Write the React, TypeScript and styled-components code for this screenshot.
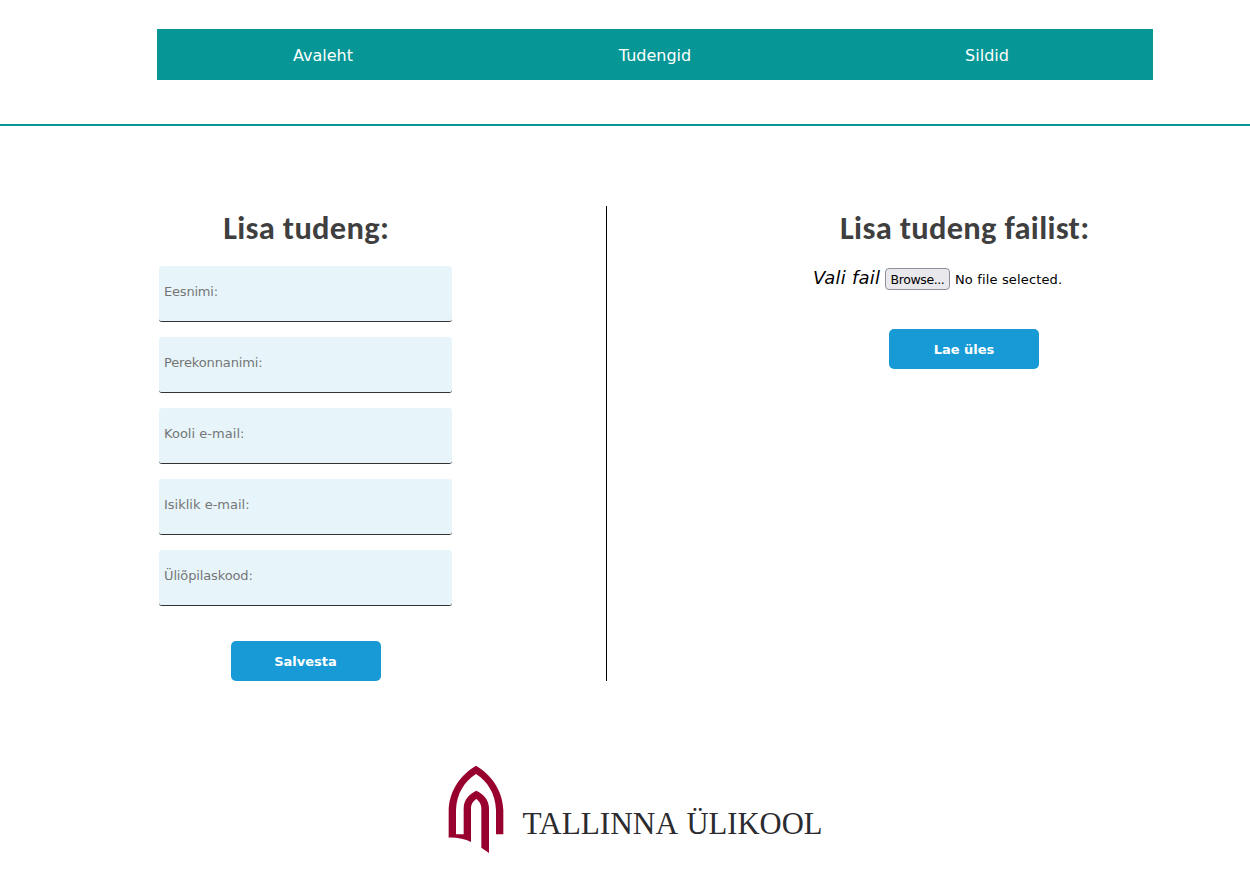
import React from 'react';
import styled, { createGlobalStyle } from 'styled-components';

const GlobalStyle = createGlobalStyle`
  * { box-sizing: border-box; }
  body {
    margin: 0;
    background: #fff;
    font-family: Verdana, 'DejaVu Sans', sans-serif;
    overflow: hidden;
  }
`;

const Page = styled.div`
  height: 877px;
  display: flex;
  flex-direction: column;
`;

const Header = styled.header`
  height: 126px;
  padding: 29px 97px 0 157px;
  border-bottom: 2px solid #069695;
`;

const Nav = styled.nav`
  height: 51px;
  display: grid;
  grid-template-columns: repeat(3, 1fr);
  background: #069695;
`;

const NavLink = styled.a`
  display: flex;
  align-items: center;
  justify-content: center;
  padding-top: 1px;
  color: #fff;
  font-size: 16px;
  text-decoration: none;
`;

const Main = styled.main`
  display: flex;
  height: 475px;
  margin-top: 80px;
`;

const AddPanel = styled.form`
  width: 607px;
  padding: 0 154px 0 159px;
  display: flex;
  flex-direction: column;
  align-items: center;
  border-right: 1px solid #000;
`;

const UploadPanel = styled.form`
  width: 643px;
  padding-left: 71px;
  display: flex;
  flex-direction: column;
  align-items: center;
`;

const Title = styled.h1`
  margin: 0;
  height: 60px;
  padding-left: 1.5px;
  line-height: 44px;
  color: #3f3f3f;
  font-family: Calibri, Carlito, Lato, sans-serif;
  font-size: 32.5px;
  font-weight: 700;
  letter-spacing: 0.3px;
  white-space: nowrap;
`;

const Field = styled.input<{ $spacing: number }>`
  display: block;
  align-self: flex-start;
  width: 293px;
  height: 56px;
  margin: 0 0 15px;
  padding: 0 5px 4px;
  border: 0;
  border-bottom: 1px solid #333;
  border-radius: 3px;
  background: #e7f5fb;
  font: 13px Verdana, 'DejaVu Sans', sans-serif;
  letter-spacing: ${(p) => p.$spacing}px;
  &::placeholder { color: #757575; opacity: 1; }
`;

const Submit = styled.button<{ $top: number }>`
  width: 150px;
  height: 40px;
  flex: none;
  margin: ${(p) => p.$top}px 0 0;
  padding: 0;
  border: 0;
  border-radius: 5px;
  background: #189ad6;
  color: #fff;
  font: bold 13px Verdana, 'DejaVu Sans', sans-serif;
`;

const FileRow = styled.div`
  width: 302px;
  height: 24px;
  display: flex;
  align-items: center;
`;

const FileLabel = styled.label`
  width: 72px;
  padding-bottom: 1px;
  font-size: 18px;
  font-style: italic;
  letter-spacing: 0.2px;
  white-space: nowrap;
`;

const Browse = styled.button`
  width: 65px;
  height: 22px;
  margin-top: 2px;
  padding: 0;
  border: 1px solid #8f8f9d;
  border-radius: 4px;
  background: #e9e9ed;
  color: #000;
  font: 12.5px Verdana, 'DejaVu Sans', sans-serif;
  letter-spacing: -0.4px;
`;

const FileName = styled.span`
  margin: 3px 0 0 5px;
  font-size: 13px;
  letter-spacing: 0.15px;
  white-space: nowrap;
`;

const Footer = styled.footer`
  margin-top: 74px;
  padding-left: 430px;
`;

const Logo = styled.svg`
  display: block;
`;

const LogoText = styled.text`
  fill: #2b2b30;
  font-family: 'Liberation Serif', serif;
  font-size: 31px;
`;

const links = ['Avaleht', 'Tudengid', 'Sildid'];

const fields = [
  { label: 'Eesnimi:', spacing: -0.2 },
  { label: 'Perekonnanimi:', spacing: -0.14 },
  { label: 'Kooli e-mail:', spacing: 0.03 },
  { label: 'Isiklik e-mail:', spacing: 0 },
  { label: 'Üliõpilaskood:', spacing: -0.13 },
];

export default function App() {
  return (
    <Page>
      <GlobalStyle />
      <Header>
        <Nav>
          {links.map((label) => (
            <NavLink key={label}>{label}</NavLink>
          ))}
        </Nav>
      </Header>
      <Main>
        <AddPanel>
          <Title>Lisa tudeng:</Title>
          {fields.map((f) => (
            <Field key={f.label} placeholder={f.label} $spacing={f.spacing} />
          ))}
          <Submit type="button" $top={20}>Salvesta</Submit>
        </AddPanel>
        <UploadPanel>
          <Title>Lisa tudeng failist:</Title>
          <FileRow>
            <FileLabel>Vali fail</FileLabel>
            <Browse type="button">Browse...</Browse>
            <FileName>No file selected.</FileName>
          </FileRow>
          <Submit type="button" $top={39}>Lae üles</Submit>
        </UploadPanel>
      </Main>
      <Footer>
        <Logo width="410" height="110" viewBox="0 0 410 110">
          <path
            transform="scale(.33333)"
            fill="#98002e"
            d="M56 248V165C58 105 94 57 138 32C182 57 218 105 220 165V238H198V165C196 115 173 80 138 57C103 80 80 115 78 165V238H101V160C101 132 120 116 139 107C158 116 177 132 177 160V294L154 278V162C154 146 147 138 139 132C130 138 123 146 123 162V261C105 252 80 247 56 248Z"
          />
          <LogoText x="92.5" y="79" textLength="155.5" lengthAdjust="spacingAndGlyphs">
            TALLINNA
          </LogoText>
          <LogoText x="256.5" y="79" textLength="136" lengthAdjust="spacingAndGlyphs">
            ÜLIKOOL
          </LogoText>
        </Logo>
      </Footer>
    </Page>
  );
}
